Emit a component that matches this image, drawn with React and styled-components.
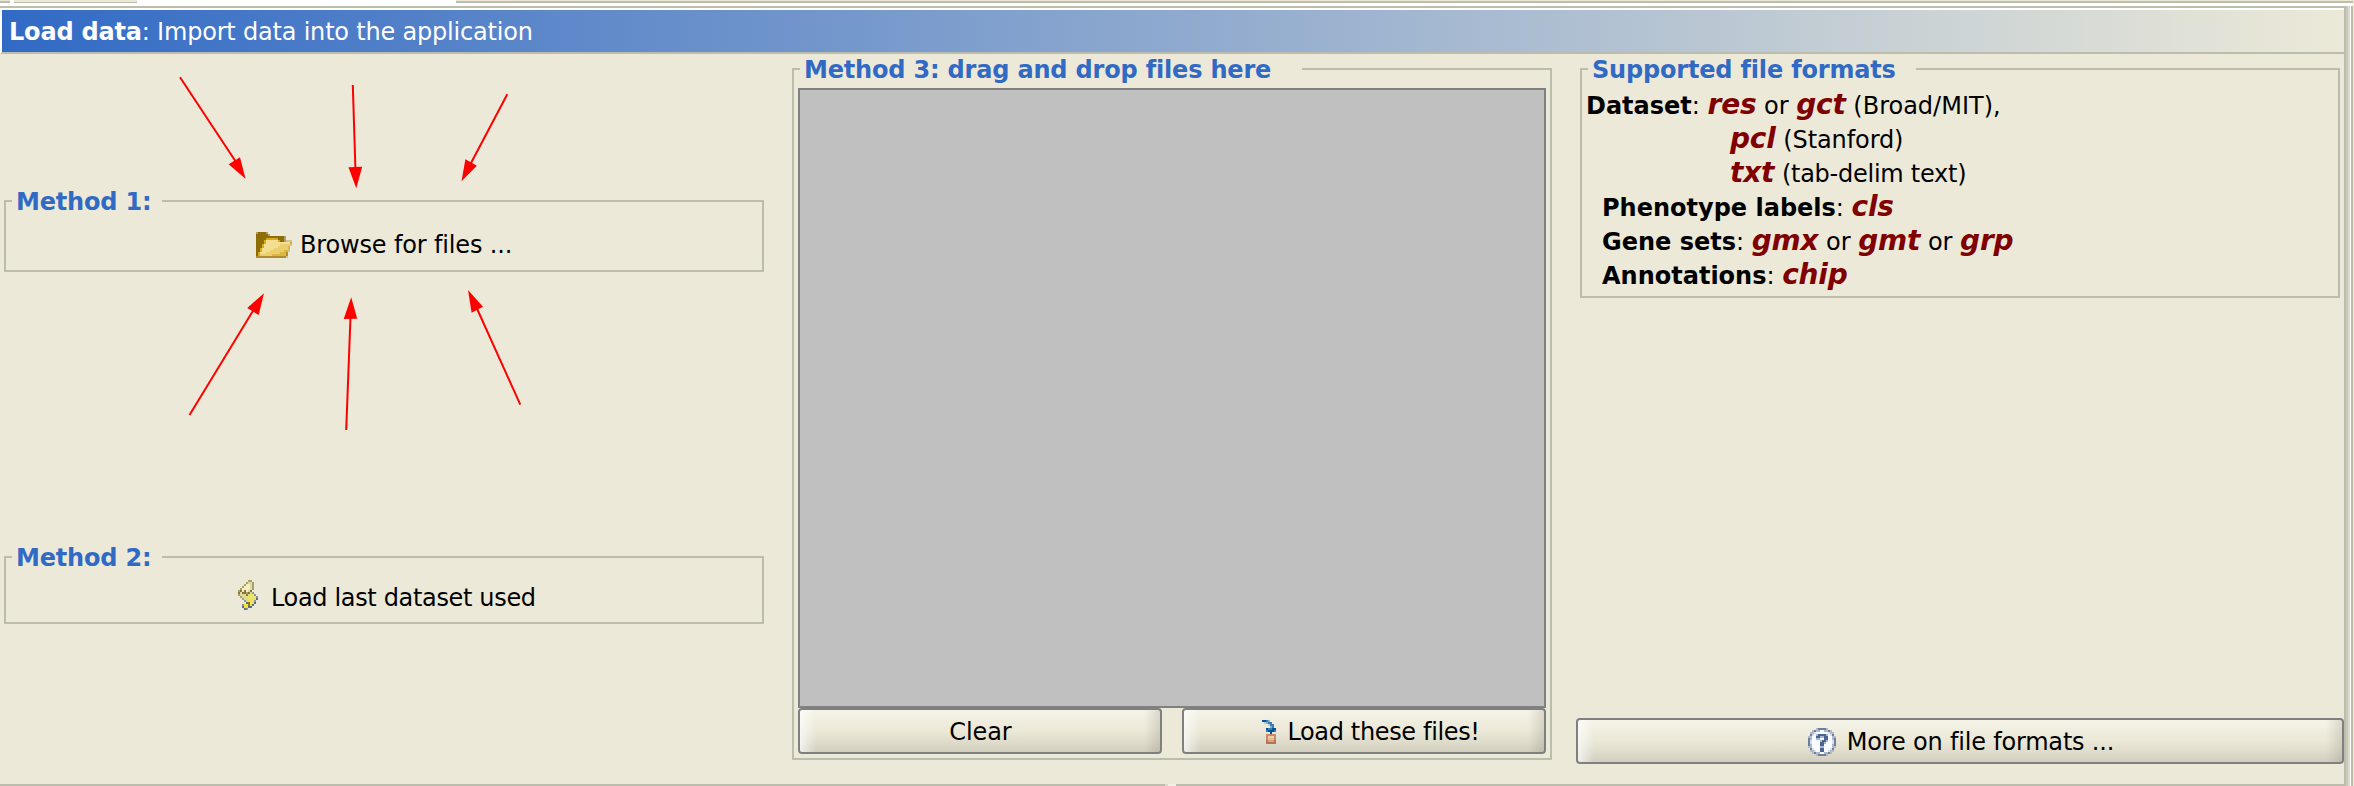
import React from "react";
import styled, { createGlobalStyle } from "styled-components";

const LINE = "#bdbdae";
const BG = "#ece9d8";
const BLUE = "#316ac5";

const Global = createGlobalStyle`
  body {
    margin: 0;
    overflow: hidden;
    background: ${BG};
  }
  * { box-sizing: border-box; }
`;

const Window = styled.div`
  position: relative;
  width: 2354px;
  height: 786px;
  overflow: hidden;
  display: flex;
  flex-direction: column;
  background: ${BG};
  font: 24px/28px "DejaVu Sans", sans-serif;
  color: #000;
  white-space: nowrap;
`;

const TabStrip = styled.div`
  display: flex;
  flex: none;
  height: 6px;
  width: 2353px;
  background: #fff;
`;

const TabEdge = styled.div`
  width: ${(p) => p.$w}px;
  height: 3px;
  margin-right: ${(p) => p.$gap || 0}px;
  background: ${BG};
  border-bottom: ${(p) => p.$line || 2}px solid ${LINE};
`;

const Frame = styled.div`
  display: flex;
  flex: 1;
  min-height: 0;
`;

const Content = styled.div`
  display: flex;
  flex-direction: column;
  width: 2344px;
  border-top: 2px solid ${LINE};
`;

const Header = styled.div`
  flex: none;
  height: 46px;
  border-top: 2px solid #fff;
  border-left: 2px solid #fff;
  border-bottom: 2px solid ${LINE};
  background: linear-gradient(90deg, ${BLUE}, ${BG}) padding-box;
  color: #fff;
  line-height: 44px;
  padding-left: 7px;
  letter-spacing: -0.2px;
`;

const RightEdge = styled.div`
  width: 10px;
  background: linear-gradient(
    90deg,
    ${LINE} 0 2px,
    #cbc9ba 2px 4px,
    #dcd9c9 4px 6px,
    #fff 6px 7px,
    ${LINE} 7px 9px,
    ${BG} 9px
  );
`;

const Columns = styled.div`
  display: flex;
  flex: 1;
  min-height: 0;
`;

const Column = styled.div`
  display: flex;
  flex-direction: column;
  padding: ${(p) => p.$pad};
  width: ${(p) => p.$w}px;
`;

const Group = styled.section`
  display: flex;
  flex-direction: column;
  flex: none;
  width: 760px;
  height: ${(p) => p.$h}px;
  margin-bottom: ${(p) => p.$after || 0}px;
  border: 2px solid ${LINE};
`;

const FormatsGroup = styled(Group)`
  margin-left: 4px;
`;

const Legend = styled.h2`
  flex: none;
  width: ${(p) => p.$w}px;
  height: 28px;
  margin: -14px 0 0 6px;
  padding-left: 4px;
  background: ${BG};
  color: ${BLUE};
  font-size: 24px;
  font-weight: bold;
  line-height: 28px;
  letter-spacing: -0.18px;
`;

const PlainAction = styled.div`
  display: flex;
  align-items: center;
  height: 30px;
  margin: ${(p) => p.$margin};
  gap: ${(p) => p.$gap}px;
`;

const Label = styled.span`
  letter-spacing: ${(p) => p.$track || 0}px;
  padding-top: ${(p) => p.$drop || 0}px;
`;

const DropArea = styled.div`
  width: 748px;
  height: 620px;
  margin: 4px 0 0 4px;
  background: #c0c0c0;
  border: 2px solid #808080;
`;

const ButtonRow = styled.div`
  display: flex;
  gap: 20px;
  margin-left: 4px;
`;

const Button = styled.button`
  display: flex;
  align-items: center;
  justify-content: center;
  gap: ${(p) => p.$gap || 0}px;
  width: ${(p) => p.$w}px;
  height: 46px;
  padding: 1px 0 0 ${(p) => p.$shift || 0}px;
  border: 2px solid #808080;
  border-radius: 4px;
  font: inherit;
  color: #000;
  background:
    linear-gradient(90deg, rgba(255, 255, 255, 0.75), rgba(255, 255, 255, 0) 18px),
    linear-gradient(270deg, rgba(120, 115, 100, 0.24), rgba(120, 115, 100, 0) 18px),
    linear-gradient(#f7f5ea, #ebe8d7 50%, #e0ddcd 72%, #cfccbc);
  background-origin: border-box;
`;

const FormatLine = styled.div`
  height: 34px;
  line-height: 34px;
  padding-left: ${(p) => p.$indent}px;
  white-space: pre;
`;

const FormatList = styled.div`
  padding: 5px 0 0 4px;
`;

const Ext = styled.i`
  color: #800000;
  font-size: 28px;
  font-weight: bold;
  line-height: 30px;
  letter-spacing: -0.2px;
`;

const Spacer = styled.div`
  flex: 1;
`;

const BottomEdge = styled.div`
  flex: none;
  height: 2px;
  background: linear-gradient(90deg, ${LINE} 0 1165px, #dcd9c9 1165px 1168px, #f2f0e6 1168px 1176px, ${LINE} 1176px);
`;

const ArrowLayer = styled.svg`
  position: absolute;
  left: 0;
  top: 0;
  pointer-events: none;
`;

const IconSvg = styled.svg`
  display: block;
  flex: none;
`;

function PixelIcon({ rows, palette }) {
  const w = rows[0].length;
  return (
    <IconSvg width={w * 2} height={rows.length * 2} viewBox={`0 0 ${w} ${rows.length}`} shapeRendering="crispEdges">
      {rows.flatMap((row, y) =>
        [...row].map((c, x) =>
          palette[c] ? <rect key={`${x}-${y}`} x={x} y={y} width="1" height="1" fill={palette[c]} /> : null
        )
      )}
    </IconSvg>
  );
}

const folder = {
  palette: {
    D: "#8c6d08", d: "#b4a064", t: "#cbc3a2", Y: "#d9aa1c", L: "#f3df92",
    M: "#ebcf6c", N: "#dcb842", B: "#b08c2c",
  },
  rows: [
    "dDDDDd............",
    "DDDDDDd...........",
    "DDDDDDDDDDDDDDd...",
    "DDDDDYYYYYYDDDd...",
    "DDDDYLLLLLLYDDdttt",
    "DDDDYLLLLLLLLLLLLY",
    "DDDYLLLLLLLLMMMMMt",
    "DDDYLLLLLLLMMMMMN.",
    "DDYLLLLLLMMMMMMMN.",
    "DDYLLLLMMMMMMMNNt.",
    "DYLLLMMMMMMMNNNB..",
    "DYMMMMMMNNNNNNNB..",
    "BBBBBBBBBBBBBBBt..",
  ],
};

const scroll = {
  palette: {
    t: "#ada066", c: "#f2efc4", k: "#ddd8a4", n: "#877634", y: "#ebe468",
    o: "#dedb90", g: "#8c93a0", b: "#5c6a8c", Y: "#f1e53c",
  },
  rows: [
    ".....tt...",
    "....tkkt..",
    "...tcckt..",
    "..tccckt..",
    ".tcccckt..",
    "tncnckn...",
    "nknntnog..",
    "tkoknoyyg.",
    ".tkooyyyyg",
    "..tooyyyyb",
    "...goYyyg.",
    "....bnYyb.",
    "..gYYnYb..",
    "..bYYbb...",
    "...bg.....",
  ],
};

const help = {
  palette: { a: "#6c7fa2", b: "#b5bac2", c: "#d7e0ee", w: "#f8fbff", q: "#4a648f", l: "#a8b8d0" },
  rows: [
    "....baaaab....",
    "..bablwwlbab..",
    ".bbcwwwwwwcbb.",
    ".acwlqqqqlwca.",
    "bbwwqqllqqwwbb",
    "alwwllwwqqwwla",
    "acwwwwlqqlwwca",
    "acwwwwqqlwwwca",
    "alwwwwqqwwwwla",
    "bbwwwwllwwwwbb",
    ".acwwwqqwwwca.",
    ".bbcwwqqwwcbb.",
    "..bablwwlbab..",
    "....baaaab....",
  ],
};

const load = {
  palette: {
    N: "#00539a", n: "#3b7cb2", b: "#86aecb", c: "#bdd0d9", T: "#c68a6c",
    o: "#f2d0a0", p: "#e6ba90", q: "#d8a482", R: "#b5745a",
  },
  rows: [
    "NNnb...",
    ".cbnn..",
    "...cnn.",
    "....bn.",
    "..NnnNN",
    "..nNNNn",
    "....N..",
    "..TTTTT",
    "..ToooT",
    "..TpppT",
    "..RqqqR",
    "..RRRRR",
  ],
};

const arrows = [
  { line: [180, 77.3, 236, 162], head: "245.5,178.7 228.6,164.3 240,157.3" },
  { line: [352.8, 85, 355.4, 168], head: "356.3,188.3 348.4,167.3 362.2,166.7" },
  { line: [507.3, 94.3, 470.5, 164], head: "461.5,181.3 465.4,159.3 476.9,165.7" },
  { line: [189.5, 415, 253.5, 310], head: "264,293.3 247.2,308 258.7,315" },
  { line: [346.2, 430, 350.5, 317], head: "351.2,297.3 343.7,319 357.2,318.7" },
  { line: [520.3, 404.7, 476.7, 308], head: "468,290 471.6,312.7 483,306.7" },
];

function Arrows() {
  return (
    <ArrowLayer width="760" height="450">
      {arrows.map(({ line: [x1, y1, x2, y2], head }) => (
        <g key={head}>
          <line x1={x1} y1={y1} x2={x2} y2={y2} stroke="#f00" strokeWidth="2" />
          <polygon points={head} fill="#f00" />
        </g>
      ))}
    </ArrowLayer>
  );
}

export default function App() {
  return (
    <Window>
      <Global />
      <TabStrip>
        <TabEdge $w={10} $gap={4} />
        <TabEdge $w={123} $gap={319} $line={1} />
        <TabEdge $w={1897} />
      </TabStrip>
      <Frame>
        <Content>
          <Header>
            <b>Load data</b>: Import data into the application
          </Header>
          <Columns>
            <Column $w={792} $pad="146px 0 0 4px">
              <Group $h={72} $after={284}>
                <Legend $w={150}>Method 1:</Legend>
                <PlainAction $margin="14px 0 0 250px" $gap={8}>
                  <PixelIcon {...folder} />
                  <Label $track={-0.15}>Browse for files ...</Label>
                </PlainAction>
              </Group>
              <Group $h={68}>
                <Legend $w={150}>Method 2:</Legend>
                <PlainAction $margin="8px 0 0 232px" $gap={13}>
                  <PixelIcon {...scroll} />
                  <Label $track={-0.34} $drop={6}>Load last dataset used</Label>
                </PlainAction>
              </Group>
            </Column>
            <Column $w={784} $pad="14px 0 0 0">
              <Group $h={692}>
                <Legend $w={502}>Method 3: drag and drop files here</Legend>
                <DropArea />
                <ButtonRow>
                  <Button $w={364} $shift={1}>
                    <Label $track={-0.1}>Clear</Label>
                  </Button>
                  <Button $w={364} $gap={11} $shift={14}>
                    <PixelIcon {...load} />
                    <Label $track={-0.35}>Load these files!</Label>
                  </Button>
                </ButtonRow>
              </Group>
            </Column>
            <Column $w={768} $pad="14px 0 20px 0">
              <FormatsGroup $h={230}>
                <Legend $w={328}>Supported file formats</Legend>
                <FormatList>
                  <FormatLine $indent={0}><b>Dataset</b>: <Ext>res</Ext> or <Ext>gct</Ext> (Broad/MIT),</FormatLine>
                  <FormatLine $indent={144}><Ext>pcl</Ext> <Label $track={-0.1}>(Stanford)</Label></FormatLine>
                  <FormatLine $indent={144}><Ext>txt</Ext> <Label $track={-0.25}>(tab-delim text)</Label></FormatLine>
                  <FormatLine $indent={16}><b>Phenotype labels</b>: <Ext>cls</Ext></FormatLine>
                  <FormatLine $indent={16}><b>Gene sets</b>: <Ext>gmx</Ext> or <Ext>gmt</Ext> or <Ext>grp</Ext></FormatLine>
                  <FormatLine $indent={16}><b>Annotations</b>: <Ext>chip</Ext></FormatLine>
                </FormatList>
              </FormatsGroup>
              <Spacer />
              <Button $w={768} $gap={11} $shift={2}>
                <PixelIcon {...help} />
                <Label $track={-0.19}>More on file formats ...</Label>
              </Button>
            </Column>
          </Columns>
          <BottomEdge />
        </Content>
        <RightEdge />
      </Frame>
      <Arrows />
    </Window>
  );
}
